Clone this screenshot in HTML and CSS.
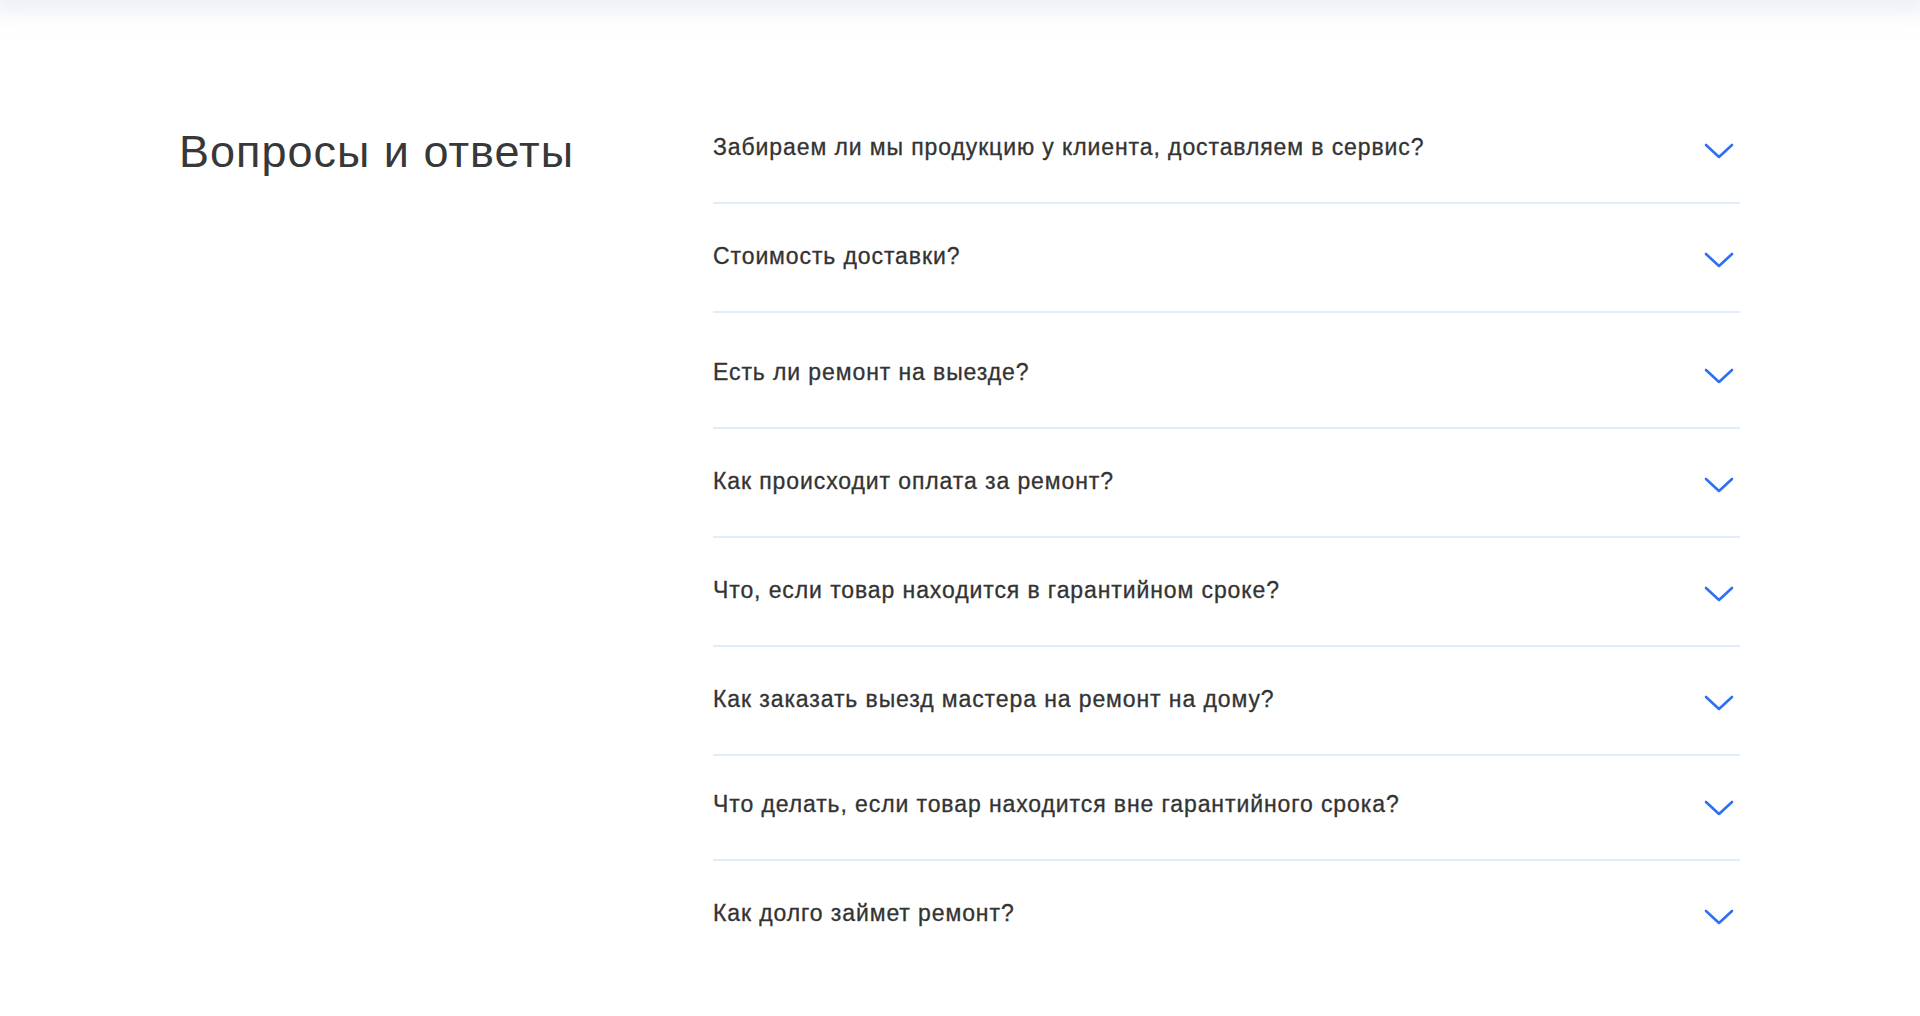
FILE: index.html
```html
<!DOCTYPE html>
<html lang="ru">
<head>
<meta charset="utf-8">
<title>Вопросы и ответы</title>
<link rel="stylesheet" href="styles.css">
</head>
<body>
<header class="topbar"></header>
<main class="faq">
  <h2 class="faq-title">Вопросы и ответы</h2>
  <ul class="faq-list">
    <li class="faq-item"><span class="faq-q">Забираем ли мы продукцию у клиента, доставляем в сервис?</span><svg class="chev" viewBox="0 0 30 16" width="30" height="16"><path d="M2 2 L15 14 L28 2" fill="none" stroke="#2f6ef6" stroke-width="2.6" stroke-linecap="round" stroke-linejoin="round"/></svg></li>
    <li class="faq-item"><span class="faq-q">Стоимость доставки?</span><svg class="chev" viewBox="0 0 30 16" width="30" height="16"><path d="M2 2 L15 14 L28 2" fill="none" stroke="#2f6ef6" stroke-width="2.6" stroke-linecap="round" stroke-linejoin="round"/></svg></li>
    <li class="faq-item faq-item--tall"><span class="faq-q">Есть ли ремонт на выезде?</span><svg class="chev" viewBox="0 0 30 16" width="30" height="16"><path d="M2 2 L15 14 L28 2" fill="none" stroke="#2f6ef6" stroke-width="2.6" stroke-linecap="round" stroke-linejoin="round"/></svg></li>
    <li class="faq-item"><span class="faq-q">Как происходит оплата за ремонт?</span><svg class="chev" viewBox="0 0 30 16" width="30" height="16"><path d="M2 2 L15 14 L28 2" fill="none" stroke="#2f6ef6" stroke-width="2.6" stroke-linecap="round" stroke-linejoin="round"/></svg></li>
    <li class="faq-item"><span class="faq-q">Что, если товар находится в гарантийном сроке?</span><svg class="chev" viewBox="0 0 30 16" width="30" height="16"><path d="M2 2 L15 14 L28 2" fill="none" stroke="#2f6ef6" stroke-width="2.6" stroke-linecap="round" stroke-linejoin="round"/></svg></li>
    <li class="faq-item"><span class="faq-q">Как заказать выезд мастера на ремонт на дому?</span><svg class="chev" viewBox="0 0 30 16" width="30" height="16"><path d="M2 2 L15 14 L28 2" fill="none" stroke="#2f6ef6" stroke-width="2.6" stroke-linecap="round" stroke-linejoin="round"/></svg></li>
    <li class="faq-item faq-item--short"><span class="faq-q">Что делать, если товар находится вне гарантийного срока?</span><svg class="chev" viewBox="0 0 30 16" width="30" height="16"><path d="M2 2 L15 14 L28 2" fill="none" stroke="#2f6ef6" stroke-width="2.6" stroke-linecap="round" stroke-linejoin="round"/></svg></li>
    <li class="faq-item"><span class="faq-q">Как долго займет ремонт?</span><svg class="chev" viewBox="0 0 30 16" width="30" height="16"><path d="M2 2 L15 14 L28 2" fill="none" stroke="#2f6ef6" stroke-width="2.6" stroke-linecap="round" stroke-linejoin="round"/></svg></li>
  </ul>
</main>
</body>
</html>
```

FILE: styles.css
```css
* { box-sizing: border-box; }
html, body {
  margin: 0;
  padding: 0;
  background: #ffffff;
  font-family: "Liberation Sans", Arial, Helvetica, sans-serif;
  color: #333333;
}
.topbar {
  height: 0;
  box-shadow: 0 0 22px 8px rgba(205, 210, 228, 0.55);
}
.faq {
  display: flex;
  align-items: flex-start;
  padding: 95px 0 0 179px;
}
.faq-title {
  width: 534px;
  flex: none;
  margin: 31px 0 0 0;
  font-size: 45px;
  line-height: 52px;
  letter-spacing: 1px;
  font-weight: normal;
  color: #383838;
}
.faq-list {
  list-style: none;
  margin: 0;
  padding: 0;
  width: 1027px;
}
.faq-item {
  display: flex;
  align-items: center;
  justify-content: space-between;
  padding: 39px 6px 42px 0;
  border-bottom: 2px solid #e1ecfc;
}
.faq-item--tall {
  padding-top: 46px;
}
.faq-item--short {
  padding-top: 35px;
}
.faq-item:last-child {
  border-bottom: none;
}
.faq-q {
  font-size: 23px;
  line-height: 26px;
  letter-spacing: 0.9px;
  color: #333333;
  -webkit-text-stroke: 0.3px #333333;
}
.chev {
  display: block;
  margin-top: 8px;
  flex: none;
}
```
